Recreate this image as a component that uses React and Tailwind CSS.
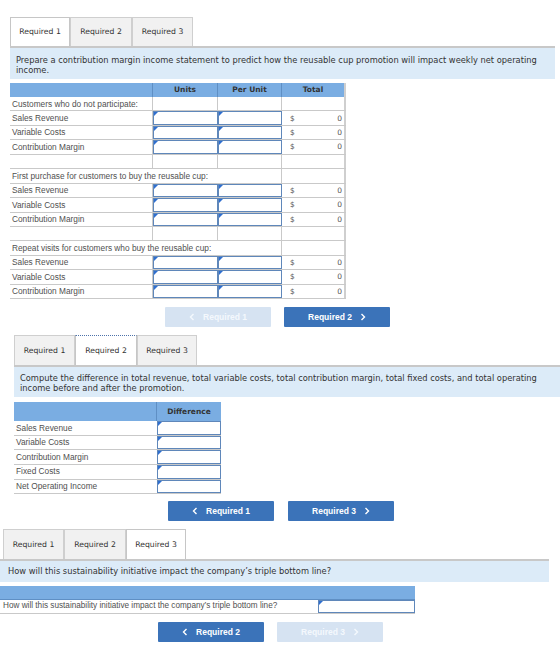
import React from "react";

const VERDANA = "font-['DejaVu_Sans',Verdana,sans-serif]";
const ARIAL = "font-['Liberation_Sans',Arial,sans-serif]";

function Tab({ label, active, focused, width }) {
  return (
    <div
      className={`flex items-center justify-center border border-b-0 text-[7.7px] text-[#333] ${VERDANA} ${width} ${
        active ? "border-[#c6c6c6] bg-white" : "border-[#cfcfcf] bg-[#f1f1f1]"
      } ${focused ? "border-t-[#4d72aa] [border-top-style:dotted]" : ""}`}
    >
      {label}
    </div>
  );
}

function Tabs({ active, widths, focused, height }) {
  return (
    <div className={`flex ${height}`}>
      {["Required 1", "Required 2", "Required 3"].map((t, i) => (
        <Tab key={t} label={t} active={i === active} focused={focused && i === active} width={widths[i]} />
      ))}
    </div>
  );
}

function Chevron({ dir }) {
  return (
    <svg width="6" height="8" viewBox="0 0 6 8" className="shrink-0">
      <path
        d={dir === "left" ? "M4.5 1 L1.5 4 L4.5 7" : "M1.5 1 L4.5 4 L1.5 7"}
        fill="none"
        stroke="currentColor"
        strokeWidth="1.4"
      />
    </svg>
  );
}

function NavButton({ label, dir, disabled }) {
  return (
    <div
      className={`flex h-[20px] w-[106px] items-center justify-center gap-[8px] rounded-[1px] text-[8.5px] font-bold ${ARIAL} ${
        disabled ? "bg-[#d6e3f2] text-[#f4f8fd]" : "bg-[#3b73b9] text-white"
      }`}
    >
      {dir === "left" && <Chevron dir="left" />}
      <span>{label}</span>
      {dir === "right" && <Chevron dir="right" />}
    </div>
  );
}

function InputCell({ width }) {
  return (
    <div className={`relative h-full shrink-0 border-[1.5px] border-[#5f87ba] bg-white ${width}`}>
      <div className="absolute left-0 top-0 h-0 w-0 border-b-[2px] border-l-[2px] border-r-[2px] border-t-[2px] border-b-transparent border-l-[#2f6fd0] border-r-transparent border-t-[#2f6fd0]" />
    </div>
  );
}

function TotalCell() {
  return (
    <div className={`flex h-full w-[64px] shrink-0 items-center justify-between border-r-2 border-r-[#cfcfcf] pl-[8px] pr-[2px] text-[7.5px] text-[#555] ${VERDANA}`}>
      <span>$</span>
      <span>0</span>
    </div>
  );
}

function StatementTable() {
  const group = (heading, spans) => [
    { kind: spans ? "span" : "heading", text: heading },
    { kind: "input", text: "Sales Revenue" },
    { kind: "input", text: "Variable Costs" },
    { kind: "input", text: "Contribution Margin" },
  ];
  const rows = [
    ...group("Customers who do not participate:", false),
    { kind: "blank" },
    ...group("First purchase for customers to buy the reusable cup:", true),
    { kind: "blank" },
    ...group("Repeat visits for customers who buy the reusable cup:", true),
  ];

  return (
    <div className={`mt-[4px] w-[336px] ${ARIAL}`}>
      <div className={`flex h-[14px] bg-[#7aade2] text-[7.5px] font-bold text-[#333] ${VERDANA}`}>
        <div className="w-[143px] border-r border-r-[#5f8fc4]" />
        <div className="flex w-[65px] items-center justify-center border-r border-r-[#5f8fc4]">Units</div>
        <div className="flex w-[64px] items-center justify-center border-r border-r-[#5f8fc4]">Per Unit</div>
        <div className="flex w-[64px] items-center justify-center border-r-2 border-r-[#cfcfcf]">Total</div>
      </div>
      {rows.map((r, i) => (
        <div key={i} className="flex h-[14.45px] border-b border-b-[#c9c9c9] text-[8.3px] text-[#505050]">
          {r.kind === "span" ? (
            <div className="flex w-[272px] shrink-0 items-center whitespace-nowrap border-r border-r-[#c9c9c9] pl-[2px]">
              {r.text}
            </div>
          ) : (
            <>
              <div className="flex w-[143px] shrink-0 items-center whitespace-nowrap border-r border-r-[#c9c9c9] pl-[2px]">
                {r.text}
              </div>
              {r.kind === "input" ? (
                <>
                  <InputCell width="w-[65px]" />
                  <InputCell width="w-[64px]" />
                </>
              ) : (
                <>
                  <div className="w-[65px] shrink-0 border-r border-r-[#c9c9c9]" />
                  <div className="w-[64px] shrink-0 border-r border-r-[#c9c9c9]" />
                </>
              )}
            </>
          )}
          {r.kind === "input" ? (
            <TotalCell />
          ) : (
            <div className="w-[64px] shrink-0 border-r-2 border-r-[#cfcfcf]" />
          )}
        </div>
      ))}
    </div>
  );
}

function DifferenceTable() {
  const labels = ["Sales Revenue", "Variable Costs", "Contribution Margin", "Fixed Costs", "Net Operating Income"];
  return (
    <div className={`mt-[5px] w-[207px] ${ARIAL}`}>
      <div className={`flex h-[19px] bg-[#7aade2] text-[7.5px] font-bold text-[#333] ${VERDANA}`}>
        <div className="w-[143px] border-r border-r-[#5f8fc4]" />
        <div className="flex w-[64px] items-center justify-center">Difference</div>
      </div>
      {labels.map((l) => (
        <div key={l} className="flex h-[14.6px] border-b border-b-[#c9c9c9] text-[8.3px] text-[#505050]">
          <div className="flex w-[143px] shrink-0 items-center pl-[2px]">{l}</div>
          <InputCell width="w-[64px]" />
        </div>
      ))}
    </div>
  );
}

export default function App() {
  return (
    <div className="h-[649px] w-[560px] overflow-hidden bg-white">
      {/* Required 1 */}
      <section className="ml-[10px] w-[545px] pt-[17px]">
        <Tabs active={0} widths={["w-[60px]", "w-[62px]", "w-[61px]"]} height="h-[29px]" />
        <div className={`h-[33px] border-t-2 border-t-[#c8c8c8] bg-[#dcebf8] px-[6px] pt-[7px] text-[8.3px] leading-[10px] text-[#333] ${VERDANA}`}>
          Prepare a contribution margin income statement to predict how the reusable cup promotion will impact weekly net operating income.
        </div>
        <StatementTable />
        <div className="mt-[8px] flex gap-[13px] pl-[155px]">
          <NavButton label="Required 1" dir="left" disabled />
          <NavButton label="Required 2" dir="right" />
        </div>
      </section>

      {/* Required 2 */}
      <section className="ml-[14px] w-[546px] pt-[8px]">
        <Tabs active={1} widths={["w-[61px]", "w-[62px]", "w-[60px]"]} focused height="h-[30px]" />
        <div className={`h-[32px] border-t-2 border-t-[#c8c8c8] bg-[#dcebf8] px-[6px] pt-[6px] text-[8.3px] leading-[10px] text-[#333] ${VERDANA}`}>
          Compute the difference in total revenue, total variable costs, total contribution margin, total fixed costs, and total operating income before and after the promotion.
        </div>
        <DifferenceTable />
        <div className="mt-[7px] flex gap-[14px] pl-[154px]">
          <NavButton label="Required 1" dir="left" />
          <NavButton label="Required 3" dir="right" />
        </div>
      </section>

      {/* Required 3 */}
      <section className="w-[549px] pt-[8px]">
        <div className="pl-[3px]">
          <Tabs active={2} widths={["w-[61px]", "w-[62px]", "w-[60px]"]} height="h-[30px]" />
        </div>
        <div className={`flex h-[23px] items-center border-t-2 border-t-[#c8c8c8] bg-[#dcebf8] pl-[8px] text-[8.3px] text-[#333] ${VERDANA}`}>
          How will this sustainability initiative impact the company’s triple bottom line?
        </div>
        <div className="mt-[4px] w-[415px]">
          <div className="h-[14px] border-b border-b-[#5f8fc4] bg-[#7aade2]" />
          <div className="flex h-[14px] border-b border-b-[#c9c9c9]">
            <div className={`flex w-[318px] items-center whitespace-nowrap pl-[3px] text-[8.2px] text-[#505050] ${ARIAL}`}>
              How will this sustainability initiative impact the company’s triple bottom line?
            </div>
            <InputCell width="w-[97px]" />
          </div>
        </div>
        <div className="mt-[8px] flex gap-[13px] pl-[158px]">
          <NavButton label="Required 2" dir="left" />
          <NavButton label="Required 3" dir="right" disabled />
        </div>
      </section>
    </div>
  );
}
